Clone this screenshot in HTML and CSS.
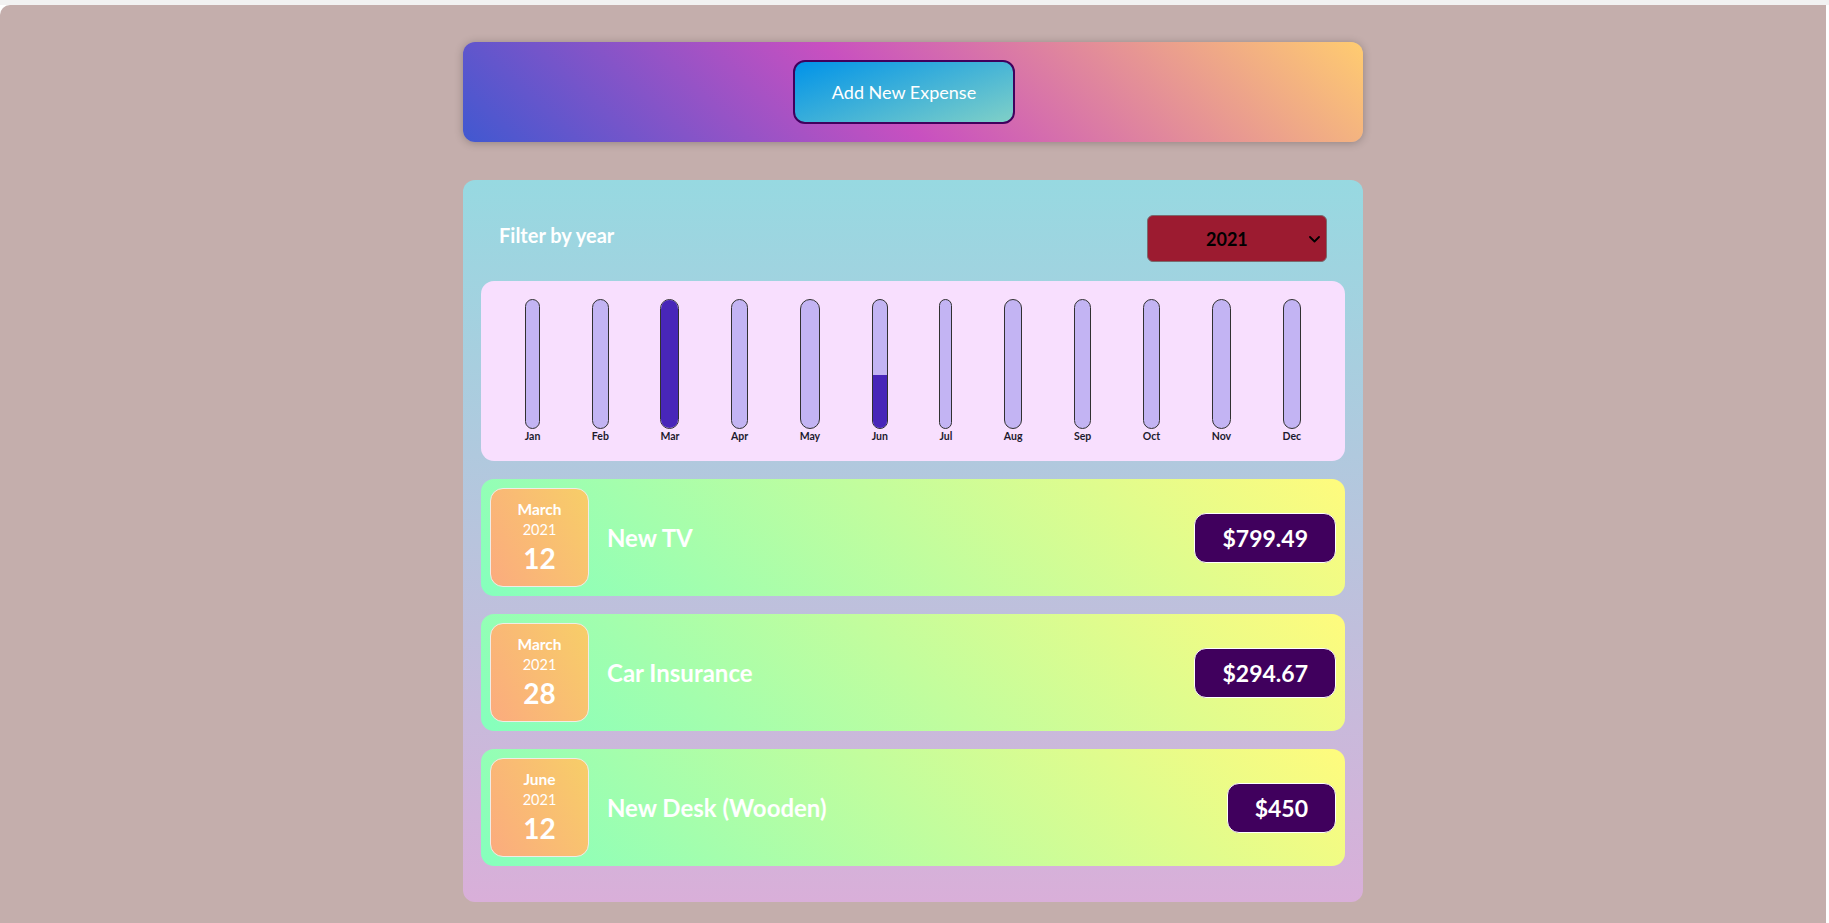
FILE: index.html
```html
<!DOCTYPE html>
<html lang="en">
<head>
<meta charset="utf-8">
<title>Expenses</title>
<link rel="stylesheet" href="styles.css">
</head>
<body>
<div class="frame">
  <div class="new-expense">
    <button class="add-btn" type="button">Add New Expense</button>
  </div>

  <div class="expenses">
    <div class="filter">
      <label class="filter-label" for="year">Filter by year</label>
      <div class="select-wrap">
        <select id="year" class="year-select">
          <option>2021</option>
          <option>2020</option>
          <option>2019</option>
          <option>2022</option>
        </select>
        <svg class="chevron" width="11" height="7" viewBox="0 0 11 7"><path d="M1 1 L5.5 5.5 L10 1" fill="none" stroke="#000" stroke-width="1.8" stroke-linecap="round" stroke-linejoin="round"/></svg>
      </div>
    </div>

    <div class="chart">
      <div class="chart-bar"><div class="bar-inner"><div class="bar-fill" style="height:0%"></div></div><div class="bar-label">Jan</div></div>
      <div class="chart-bar"><div class="bar-inner"><div class="bar-fill" style="height:0%"></div></div><div class="bar-label">Feb</div></div>
      <div class="chart-bar"><div class="bar-inner"><div class="bar-fill" style="height:100%"></div></div><div class="bar-label">Mar</div></div>
      <div class="chart-bar"><div class="bar-inner"><div class="bar-fill" style="height:0%"></div></div><div class="bar-label">Apr</div></div>
      <div class="chart-bar"><div class="bar-inner"><div class="bar-fill" style="height:0%"></div></div><div class="bar-label">May</div></div>
      <div class="chart-bar"><div class="bar-inner"><div class="bar-fill" style="height:41.13%"></div></div><div class="bar-label">Jun</div></div>
      <div class="chart-bar"><div class="bar-inner"><div class="bar-fill" style="height:0%"></div></div><div class="bar-label">Jul</div></div>
      <div class="chart-bar"><div class="bar-inner"><div class="bar-fill" style="height:0%"></div></div><div class="bar-label">Aug</div></div>
      <div class="chart-bar"><div class="bar-inner"><div class="bar-fill" style="height:0%"></div></div><div class="bar-label">Sep</div></div>
      <div class="chart-bar"><div class="bar-inner"><div class="bar-fill" style="height:0%"></div></div><div class="bar-label">Oct</div></div>
      <div class="chart-bar"><div class="bar-inner"><div class="bar-fill" style="height:0%"></div></div><div class="bar-label">Nov</div></div>
      <div class="chart-bar"><div class="bar-inner"><div class="bar-fill" style="height:0%"></div></div><div class="bar-label">Dec</div></div>
    </div>

    <ul class="expense-list">
      <li class="expense-item">
        <div class="expense-date">
          <div class="date-month">March</div>
          <div class="date-year">2021</div>
          <div class="date-day">12</div>
        </div>
        <h2 class="expense-title">New TV</h2>
        <div class="expense-price">$799.49</div>
      </li>
      <li class="expense-item">
        <div class="expense-date">
          <div class="date-month">March</div>
          <div class="date-year">2021</div>
          <div class="date-day">28</div>
        </div>
        <h2 class="expense-title">Car Insurance</h2>
        <div class="expense-price">$294.67</div>
      </li>
      <li class="expense-item">
        <div class="expense-date">
          <div class="date-month">June</div>
          <div class="date-year">2021</div>
          <div class="date-day">12</div>
        </div>
        <h2 class="expense-title">New Desk (Wooden)</h2>
        <div class="expense-price">$450</div>
      </li>
    </ul>
  </div>
</div>
</body>
</html>
```

FILE: styles.css
```css
* {
  box-sizing: border-box;
}

html, body {
  margin: 0;
  padding: 0;
  height: 100%;
}

body {
  font-family: "Lato", "Open Sans", sans-serif;
  font-size: 18px;
  background: linear-gradient(#f2f2f2 5px, #ffffff 5px);
  overflow: hidden;
}

.frame {
  display: flow-root;
  margin: 5px 3px 0 0;
  min-height: 918px;
  background-color: #c4aeac;
  border-top-left-radius: 10px;
}

.new-expense {
  width: 900px;
  margin: 37px auto 38px;
  padding: 18px;
  border-radius: 12px;
  text-align: center;
  background-image: linear-gradient(43deg, #4158D0 0%, #C850C0 46%, #FFCC70 100%);
  box-shadow: 0 1px 8px rgba(0, 0, 0, 0.25);
}

.add-btn {
  font-family: inherit;
  font-size: 18px;
  line-height: 24px;
  padding: 18px 37px;
  margin-right: 18px;
  color: #ffffff;
  border: 2px solid #40005d;
  border-radius: 12px;
  background-image: linear-gradient(160deg, #0093E9 0%, #80D0C7 100%);
  cursor: pointer;
}

.expenses {
  width: 900px;
  margin: 0 auto 36px;
  padding: 18px;
  border-radius: 12px;
  background-image: linear-gradient(0deg, #D9AFD9 0%, #97D9E1 100%);
}

.filter {
  display: flex;
  align-items: center;
  justify-content: space-between;
  margin: 17px 0 19px;
  padding: 0 18px;
  color: #ffffff;
}

.filter-label {
  font-weight: 700;
  font-size: 20px;
  margin-bottom: 7px;
}

.select-wrap {
  position: relative;
  width: 180px;
  height: 47px;
}

.year-select {
  appearance: none;
  -webkit-appearance: none;
  width: 180px;
  height: 47px;
  padding: 0 0 0 58px;
  font-family: inherit;
  font-size: 18px;
  font-weight: 700;
  color: #000000;
  background-color: #9c1b30;
  border: 1px solid #7a6a6e;
  border-radius: 6px;
}

.chevron {
  position: absolute;
  left: 162px;
  top: 21px;
  pointer-events: none;
}

.chart {
  display: flex;
  justify-content: space-around;
  height: 180px;
  padding: 18px;
  border-radius: 13px;
  background-color: #f8dffe;
  text-align: center;
}

.chart-bar {
  display: flex;
  flex-direction: column;
  align-items: center;
  height: 100%;
}

.bar-inner {
  display: flex;
  flex-direction: column;
  justify-content: flex-end;
  width: 100%;
  height: 130px;
  border: 1px solid #313131;
  border-radius: 12px;
  background-color: #c3b4f3;
  overflow: hidden;
}

.bar-fill {
  width: 100%;
  background-color: #4826b9;
}

.bar-label {
  font-weight: 700;
  font-size: 10.5px;
  line-height: 14px;
  color: #1d1a2e;
}

.expense-list {
  list-style: none;
  margin: 0;
  padding: 0;
}

.expense-item {
  display: flex;
  align-items: center;
  margin: 18px 0;
  padding: 9px;
  border-radius: 13px;
  background-image: linear-gradient(45deg, #85FFBD 0%, #FFFB7D 100%);
}

.expense-date {
  display: flex;
  flex-direction: column;
  align-items: center;
  justify-content: center;
  flex-shrink: 0;
  width: 99px;
  height: 99px;
  border: 1px solid #f1ebe6;
  border-radius: 13px;
  color: #ffffff;
  background-image: linear-gradient(62deg, #FBAB7E 0%, #F7CE68 100%);
}

.date-month {
  font-weight: 700;
  font-size: 15.5px;
  line-height: 20px;
}

.date-year {
  font-size: 14.5px;
  line-height: 21px;
}

.date-day {
  font-weight: 700;
  font-size: 28px;
  line-height: 36px;
}

.expense-title {
  flex: 1;
  margin: 0 18px;
  font-size: 24px;
  font-weight: 700;
  color: #ffffff;
}

.expense-price {
  padding: 9px 27px;
  font-size: 23px;
  line-height: 30px;
  font-weight: 700;
  color: #ffffff;
  background-color: #40005d;
  border: 1px solid #ffffff;
  border-radius: 12px;
}
```
